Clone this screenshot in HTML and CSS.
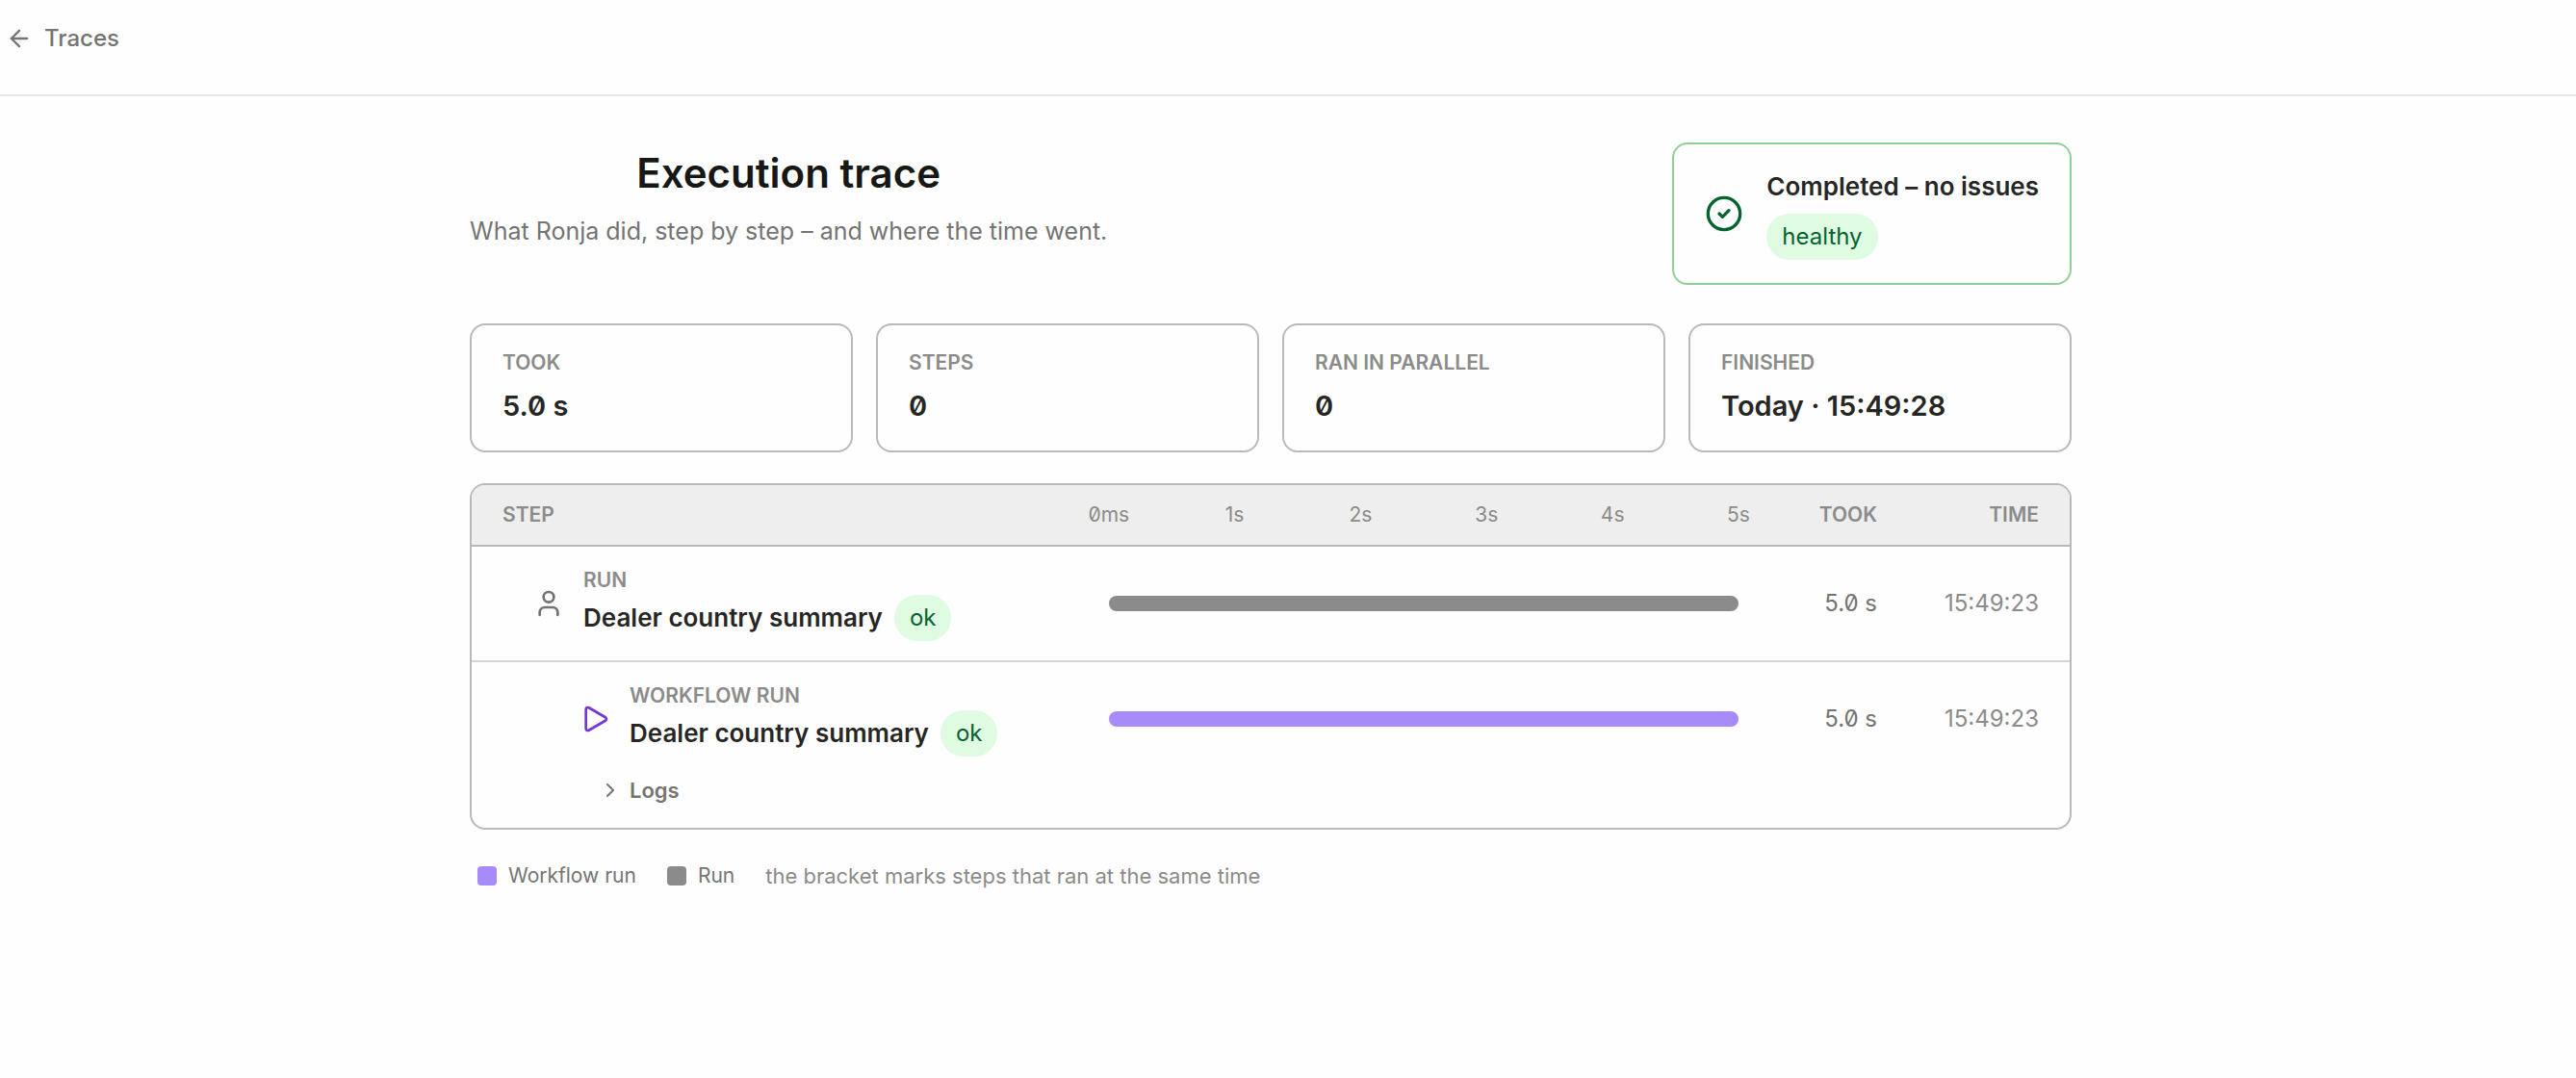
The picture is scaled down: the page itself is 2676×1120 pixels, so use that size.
FILE: index.html
```html
<!DOCTYPE html>
<html lang="en">
<head>
<meta charset="utf-8">
<meta name="viewport" content="width=device-width, initial-scale=1">
<title>Execution trace</title>
<link rel="stylesheet" href="styles.css">
</head>
<body>
<header class="topbar">
  <a class="back" href="#traces">
    <svg class="icon icon-back" viewBox="0 0 24 24" aria-hidden="true"><path d="m12 19-7-7 7-7"/><path d="M19 12H5"/></svg>
    Traces
  </a>
</header>

<main class="page">
  <div class="content">
    <section class="intro">
      <div class="heading">
        <h1 class="title">Execution trace</h1>
        <p class="subtitle">What Ronja did, step by step – and where the time went.</p>
      </div>
      <div class="status">
        <svg class="icon icon-status" viewBox="0 0 24 24" aria-hidden="true"><circle cx="12" cy="12" r="10"/><path d="m9 12 2 2 4-4"/></svg>
        <div class="status-body">
          <strong class="status-title">Completed – no issues</strong>
          <span class="badge">healthy</span>
        </div>
      </div>
    </section>

    <dl class="stats">
      <div class="stat"><dt class="label">TOOK</dt><dd class="value">5.0 s</dd></div>
      <div class="stat"><dt class="label">STEPS</dt><dd class="value">0</dd></div>
      <div class="stat"><dt class="label">RAN IN PARALLEL</dt><dd class="value">0</dd></div>
      <div class="stat"><dt class="label">FINISHED</dt><dd class="value">Today · 15:49:28</dd></div>
    </dl>

    <table class="trace">
      <thead>
        <tr class="row row-head">
          <th class="label" scope="col">STEP</th>
          <th class="axis" scope="col">
            <span class="tick">0ms</span><span class="tick">1s</span><span class="tick">2s</span><span class="tick">3s</span><span class="tick">4s</span><span class="tick">5s</span>
          </th>
          <th class="label num" scope="col">TOOK</th>
          <th class="label num" scope="col">TIME</th>
        </tr>
      </thead>
      <tbody>
        <tr class="row">
          <td class="step">
            <svg class="icon icon-step" viewBox="0 0 24 24" aria-hidden="true"><path d="M19 21v-2a4 4 0 0 0-4-4H9a4 4 0 0 0-4 4v2"/><circle cx="12" cy="7" r="4"/></svg>
            <div class="step-body">
              <span class="label">RUN</span>
              <span class="step-line"><span class="step-name">Dealer country summary</span><span class="badge">ok</span></span>
            </div>
          </td>
          <td class="track"><div class="bar bar-run" style="width:100%"></div></td>
          <td class="num took">5.0 s</td>
          <td class="num time">15:49:23</td>
        </tr>
        <tr class="row row-nested">
          <td class="step">
            <svg class="icon icon-step icon-workflow" viewBox="0 0 24 24" aria-hidden="true"><path d="M5 4.5a1.5 1.5 0 0 1 2.25-1.3l12.9 7.5a1.5 1.5 0 0 1 0 2.6l-12.9 7.5A1.5 1.5 0 0 1 5 19.5z"/></svg>
            <div class="step-body">
              <span class="label">WORKFLOW RUN</span>
              <span class="step-line"><span class="step-name">Dealer country summary</span><span class="badge">ok</span></span>
            </div>
          </td>
          <td class="track"><div class="bar bar-workflow" style="width:100%"></div></td>
          <td class="num took">5.0 s</td>
          <td class="num time">15:49:23</td>
        </tr>
        <tr class="row-logs">
          <td colspan="4">
            <button class="logs" type="button" aria-expanded="false">
              <svg class="icon icon-chevron" viewBox="0 0 24 24" aria-hidden="true"><path d="m9 18 6-6-6-6"/></svg>
              Logs
            </button>
          </td>
        </tr>
      </tbody>
    </table>

    <div class="legend">
      <span class="key"><i class="swatch bar-workflow"></i>Workflow run</span>
      <span class="key"><i class="swatch bar-run"></i>Run</span>
      <span class="hint">the bracket marks steps that ran at the same time</span>
    </div>
  </div>
</main>
</body>
</html>
```
FILE: styles.css
```css
:root {
  --ink: #262625;
  --muted: #747472;
  --faint: #8b8b89;
  --line: #b9b9b8;
  --green: #04632f;
  --run: #8b8b89;
  --workflow: #a78bfa;
}

* {
  box-sizing: border-box;
}

body {
  margin: 0;
  background: #fefefe;
  color: var(--ink);
  font-family: Inter, "Liberation Sans", sans-serif;
  font-size: 24px;
  line-height: 36px;
}

.icon {
  flex: none;
  fill: none;
  stroke: currentColor;
  stroke-width: 2;
  stroke-linecap: round;
  stroke-linejoin: round;
}

.topbar {
  display: flex;
  align-items: flex-start;
  height: 100px;
  padding: 22px 6px;
  border-bottom: 2px solid #e7e7e7;
}

.back {
  display: flex;
  align-items: center;
  gap: 12px;
  color: var(--muted);
  font-weight: 500;
  text-decoration: none;
}

.icon-back {
  width: 28px;
  height: 28px;
}

.page {
  padding: 48px 36px 48px 0;
}

.content {
  display: flex;
  flex-direction: column;
  gap: 32px;
  max-width: 1664px;
  margin: 0 auto;
}

.intro {
  display: flex;
  justify-content: space-between;
  align-items: flex-start;
  margin-bottom: 8px;
}

.title {
  margin: 0;
  color: #171716;
  font-size: 42px;
  font-weight: 600;
  line-height: 64px;
  text-align: center;
}

.subtitle {
  margin: 8px 0 0;
  color: var(--muted);
  font-size: 25px;
  line-height: 40px;
}

.status {
  display: flex;
  align-items: center;
  gap: 24px;
  padding: 24px 32px;
  border: 2px solid #8ccf9b;
  border-radius: 16px;
}

.icon-status {
  width: 40px;
  height: 40px;
  color: var(--green);
}

.status-body {
  display: flex;
  flex-direction: column;
  align-items: flex-start;
  gap: 8px;
}

.status-title,
.step-name {
  font-size: 26px;
  font-weight: 600;
  line-height: 40px;
}

.badge {
  padding: 6px 16px;
  border-radius: 24px;
  background: #dffbe2;
  color: var(--green);
}

.label {
  color: var(--faint);
  font-size: 21px;
  font-weight: 600;
  line-height: 30px;
  text-align: left;
}

.stats {
  display: grid;
  grid-template-columns: repeat(4, 1fr);
  gap: 24px;
  margin: 0;
}

.stat {
  display: flex;
  flex-direction: column;
  gap: 8px;
  padding: 24px 32px;
  border: 2px solid var(--line);
  border-radius: 16px;
}

.value {
  margin: 0;
  font-size: 29px;
  font-weight: 600;
  line-height: 44px;
  font-variant-numeric: slashed-zero;
}

.trace {
  display: block;
  overflow: hidden;
  border: 2px solid var(--line);
  border-radius: 16px;
}

.trace thead,
.trace tbody {
  display: block;
}

.trace th,
.trace td {
  padding: 0;
}

.row {
  display: grid;
  grid-template-columns: minmax(0, 1fr) minmax(0, 1.08fr) 120px 144px;
  align-items: center;
  column-gap: 24px;
  padding: 20px 32px;
  border-bottom: 2px solid #d4d4d3;
}

.row-head {
  padding: 16px 32px;
  border-bottom-color: var(--line);
  background: #eee;
}

.row-nested {
  border-bottom: 0;
}

.axis {
  display: flex;
  justify-content: space-between;
  color: var(--faint);
  font-size: 21px;
  font-weight: 400;
  line-height: 30px;
  font-variant-numeric: slashed-zero;
}

.tick {
  display: flex;
  justify-content: center;
  width: 0;
}

.num {
  text-align: right;
  font-variant-numeric: slashed-zero;
}

.took {
  color: var(--muted);
}

.time {
  color: var(--faint);
}

.step {
  display: flex;
  align-items: center;
  gap: 20px;
}

.trace .step {
  padding-left: 32px;
}

.trace .row-nested .step {
  padding-left: 80px;
}

.icon-step {
  width: 32px;
  height: 32px;
  color: var(--muted);
}

.icon-workflow {
  color: #7337d8;
}

.step-body {
  display: flex;
  flex-direction: column;
}

.step-line {
  display: flex;
  align-items: center;
  gap: 12px;
}

.bar {
  height: 16px;
  border-radius: 8px;
}

.bar-run {
  background: var(--run);
}

.bar-workflow {
  background: var(--workflow);
}

.row-logs,
.row-logs td {
  display: block;
}

.logs {
  display: flex;
  align-items: center;
  gap: 8px;
  margin: 0 0 24px 132px;
  padding: 0;
  border: 0;
  background: none;
  color: var(--muted);
  font: inherit;
  font-size: 22px;
  font-weight: 600;
  line-height: 30px;
}

.icon-chevron {
  width: 24px;
  height: 24px;
}

.legend {
  display: flex;
  flex-wrap: wrap;
  gap: 32px;
  padding: 0 8px;
  color: var(--muted);
  font-size: 22px;
  line-height: 32px;
}

.key {
  display: flex;
  align-items: center;
  gap: 12px;
  font-size: 21px;
}

.swatch {
  width: 20px;
  height: 20px;
  border-radius: 4px;
}

.hint {
  color: var(--faint);
}
```
